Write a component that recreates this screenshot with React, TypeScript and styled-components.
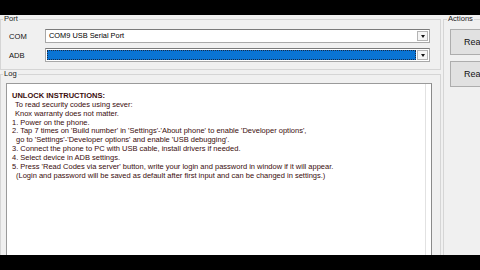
import React from "react";
import styled, { createGlobalStyle } from "styled-components";

const GlobalStyle = createGlobalStyle`
  html, body {
    margin: 0;
    padding: 0;
    background: #000;
    width: 480px;
    height: 270px;
    overflow: hidden;
  }
`;

const Screen = styled.div`
  width: 480px;
  height: 270px;
  padding-top: 15px;
  box-sizing: border-box;
  background: #000;
  overflow: hidden;
`;

const Window = styled.div`
  height: 240px;
  background: #f0f0f0;
  display: grid;
  grid-template-columns: 441px 60px;
  column-gap: 2px;
  font-family: "Liberation Sans", Arial, sans-serif;
  color: #000;
  overflow: hidden;
`;

const MainColumn = styled.div`
  display: flex;
  flex-direction: column;
  min-height: 0;
`;

const Group = styled.fieldset<{ $grow?: boolean; $height?: number }>`
  margin: 0;
  padding: 0 8px 4px 5px;
  border: 1px solid #d5d5d5;
  border-radius: 0;
  min-width: 0;
  box-sizing: border-box;
  ${(p) => (p.$height ? `height: ${p.$height}px; flex: none;` : "")}
  ${(p) => (p.$grow ? "flex: 1; min-height: 0; padding-bottom: 0; border-bottom: none;" : "")}
`;

const Legend = styled.legend`
  padding: 0 1px;
  margin-left: -3px;
  font-size: 7.6px;
  line-height: 8px;
  color: #222;
`;

const PortGrid = styled.div`
  display: grid;
  grid-template-columns: 39px 385px;
  row-gap: 5px;
  align-items: center;
  padding-top: 6px;
`;

const FieldLabel = styled.span`
  font-size: 7.6px;
  padding-left: 3px;
  color: #111;
`;

const Combo = styled.div`
  height: 14px;
  box-sizing: border-box;
  border: 1px solid #a8a8a8;
  border-top-color: #7a7a7a;
  background: #fff;
  display: flex;
  align-items: stretch;
  padding: 1px;
`;

const ComboValue = styled.div<{ $selected?: boolean }>`
  flex: 1;
  font-size: 7.4px;
  line-height: 10px;
  padding-left: 2px;
  color: #000;
  ${(p) =>
    p.$selected
      ? `background: #0a74d4; outline: 1px dotted #1a2a44; outline-offset: -1px;`
      : ""}
`;

const DropButton = styled.div`
  width: 11px;
  margin-left: 1px;
  background: #f4f4f4;
  border: 1px solid #b4b4b4;
  box-sizing: border-box;
  display: flex;
  align-items: center;
  justify-content: center;
`;

const Arrow = styled.div`
  width: 0;
  height: 0;
  border-left: 2.5px solid transparent;
  border-right: 2.5px solid transparent;
  border-top: 3px solid #111;
`;

const LogBox = styled.div`
  height: 100%;
  box-sizing: border-box;
  margin-top: 5px;
  background: #fff;
  border: 1px solid #9a9a9a;
  border-right: 1px solid #8a8a8a;
  border-bottom: none;
  padding: 8px 6px 0 5px;
  box-shadow: inset -5px 0 0 #fff, inset -6px 0 0 #e2e2e2;
`;

const LogLine = styled.div<{ $bold?: boolean; $indent?: number }>`
  font-family: "Liberation Sans", Tahoma, sans-serif;
  font-size: 7.5px;
  line-height: 8.85px;
  white-space: nowrap;
  color: #3a0c0c;
  font-weight: ${(p) => (p.$bold ? 700 : 400)};
  padding-left: ${(p) => p.$indent ?? 0}px;
`;

const SideGroup = styled(Group)`
  padding: 0 0 0 6px;
  border-right: none;
  border-bottom: none;
`;

const ButtonStack = styled.div`
  display: flex;
  flex-direction: column;
  gap: 6px;
  padding-top: 6px;
`;

const ActionButton = styled.button`
  width: 60px;
  height: 26px;
  background: #e1e1e1;
  border: 1px solid #adadad;
  font-family: "Liberation Sans", Arial, sans-serif;
  font-size: 9px;
  color: #111;
  text-align: left;
  padding: 0 0 0 13px;
  white-space: nowrap;
`;

const lines: { text: string; bold?: boolean; indent?: number }[] = [
  { text: "UNLOCK INSTRUCTIONS:", bold: true },
  { text: "To read security codes using sever:", indent: 3 },
  { text: "Knox warranty does not matter.", indent: 3 },
  { text: "1. Power on the phone." },
  {
    text: "2. Tap 7 times on 'Build number' in 'Settings'-'About phone' to enable 'Developer options',",
  },
  { text: "go to 'Settings'-'Developer options' and enable 'USB debugging'.", indent: 4 },
  { text: "3. Connect the phone to PC with USB cable, install drivers if needed." },
  { text: "4. Select device in ADB settings." },
  {
    text: "5. Press 'Read Codes via server' button, write your login and password in window if it will appear.",
  },
  {
    text: "(Login and password will be saved as default after first input and can be changed in settings.)",
    indent: 4,
  },
];

export default function App() {
  return (
    <>
      <GlobalStyle />
      <Screen>
        <Window>
          <MainColumn>
            <Group $height={55}>
              <Legend>Port</Legend>
              <PortGrid>
                <FieldLabel>COM</FieldLabel>
                <Combo>
                  <ComboValue>COM9 USB Serial Port</ComboValue>
                  <DropButton>
                    <Arrow />
                  </DropButton>
                </Combo>
                <FieldLabel>ADB</FieldLabel>
                <Combo>
                  <ComboValue $selected />
                  <DropButton>
                    <Arrow />
                  </DropButton>
                </Combo>
              </PortGrid>
            </Group>
            <Group $grow>
              <Legend>Log</Legend>
              <LogBox>
                {lines.map((l, i) => (
                  <LogLine key={i} $bold={l.bold} $indent={l.indent}>
                    {l.text}
                  </LogLine>
                ))}
              </LogBox>
            </Group>
          </MainColumn>
          <SideGroup>
            <Legend>Actions</Legend>
            <ButtonStack>
              <ActionButton>Read Codes</ActionButton>
              <ActionButton>Read Info</ActionButton>
            </ButtonStack>
          </SideGroup>
        </Window>
      </Screen>
    </>
  );
}
